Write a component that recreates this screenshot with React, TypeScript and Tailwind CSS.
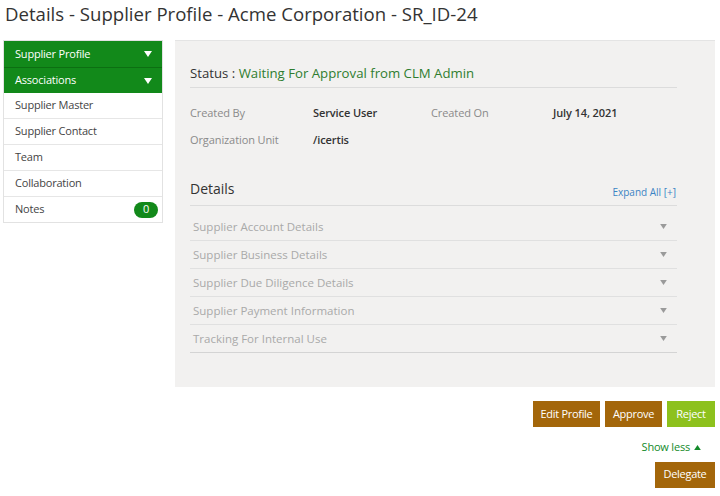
const navItems = ["Supplier Master", "Supplier Contact", "Team", "Collaboration"];
const sections = [
  "Supplier Account Details",
  "Supplier Business Details",
  "Supplier Due Diligence Details",
  "Supplier Payment Information",
  "Tracking For Internal Use",
];

function Caret({ className }: { className: string }) {
  return (
    <svg width="8" height="6" viewBox="0 0 8 6" className={className}>
      <path d="M0 0h8L4 6z" fill="currentColor" />
    </svg>
  );
}

export default function App() {
  return (
    <div className="w-[720px] h-[496px] bg-white text-[#333] overflow-hidden" style={{ fontFamily: '"Open Sans", sans-serif' }}>
      <h1 className="pl-[5px] pt-[1px] h-[40px] text-[18.6px] leading-[26px] text-[#333]">
        Details - Supplier Profile - Acme Corporation - SR_ID-24
      </h1>

      <div className="flex gap-[12px] pl-[3px] pr-[5px]">
        {/* sidebar */}
        <div className="w-[160px] self-start border border-[#e2e2e2] text-[11px] tracking-[-0.2px]">
          <div className="h-[26px] bg-[#12891a] text-white flex items-center justify-between pl-[11px] pr-[10px]">
            <span>Supplier Profile</span>
            <Caret className="text-white" />
          </div>
          <div className="h-[26px] bg-[#12891a] text-white flex items-center justify-between pl-[11px] pr-[10px] border-t border-[#0c6f12]">
            <span>Associations</span>
            <Caret className="text-white" />
          </div>
          {navItems.map(n => (
            <div key={n} className="h-[26px] flex items-center pl-[11px] border-b border-[#e6e6e6] text-[#444]">
              {n}
            </div>
          ))}
          <div className="h-[25px] flex items-center justify-between pl-[11px] pr-[4px] text-[#444]">
            <span>Notes</span>
            <span className="bg-[#12891a] text-white text-[11px] rounded-full w-[24px] h-[16px] flex items-center justify-center">0</span>
          </div>
        </div>

        {/* main panel */}
        <div className="flex-1 h-[347px] bg-[#f2f1f0] border-t border-[#e4e4e4] pl-[15px] pr-[38px] pt-[20px]">
          <div className="h-[27px] border-b border-[#dcdcdc] text-[13.2px] leading-[24px]">
            <span className="text-[#333]">Status : </span>
            <span className="text-[#2f7d2f]">Waiting For Approval from CLM Admin</span>
          </div>

          <div className="grid grid-cols-[123px_118px_122px_1fr] text-[11px] tracking-[-0.1px] mt-[16px] gap-y-[10px] leading-[17px]">
            <span className="text-[#8a8a8a]">Created By</span>
            <span className="font-semibold text-[#333]">Service User</span>
            <span className="text-[#8a8a8a]">Created On</span>
            <span className="font-semibold text-[#333]">July 14, 2021</span>
            <span className="text-[#8a8a8a]">Organization Unit</span>
            <span className="font-semibold text-[#333]">/icertis</span>
          </div>

          <div className="mt-[31px] flex items-end justify-between border-b border-[#dcdcdc] pb-[6px]">
            <span className="text-[14px] leading-[20px] text-[#333]">Details</span>
            <span className="text-[10px] text-[#3b84c4] pr-[1px] leading-[14px]">Expand All [+]</span>
          </div>

          <div className="pt-[7px]">
            {sections.map((s, i) => (
              <div
                key={s}
                className={`h-[28px] flex items-center justify-between pl-[3px] pr-[10px] border-b ${i === sections.length - 1 ? "border-[#d4d4d4]" : "border-[#e0e0e0]"} text-[11.5px] text-[#a9a9a9]`}
              >
                <span>{s}</span>
                <Caret className="text-[#9a9a9a] w-[7px] h-[5px]" />
              </div>
            ))}
          </div>
        </div>
      </div>

      {/* actions */}
      <div className="flex justify-end gap-[5px] pr-[5px] mt-[14px] text-[11px] tracking-[-0.3px] text-white">
        <button className="h-[26px] w-[67px] bg-[#a3660a]">Edit Profile</button>
        <button className="h-[26px] w-[57px] bg-[#a3660a]">Approve</button>
        <button className="h-[26px] w-[48px] bg-[#8dc11d]">Reject</button>
      </div>
      <div className="flex justify-end pr-[19px] mt-[12px]">
        <span className="flex items-center gap-[4px] text-[11px] tracking-[-0.2px] text-[#138a2a]">
          Show less
          <svg width="7" height="5" viewBox="0 0 8 6"><path d="M0 6h8L4 0z" fill="currentColor" /></svg>
        </span>
      </div>
      <div className="flex justify-end pr-[5px] mt-[6px]">
        <button className="h-[26px] w-[60px] bg-[#a3660a] text-white text-[11px] tracking-[-0.3px]">Delegate</button>
      </div>
    </div>
  );
}
